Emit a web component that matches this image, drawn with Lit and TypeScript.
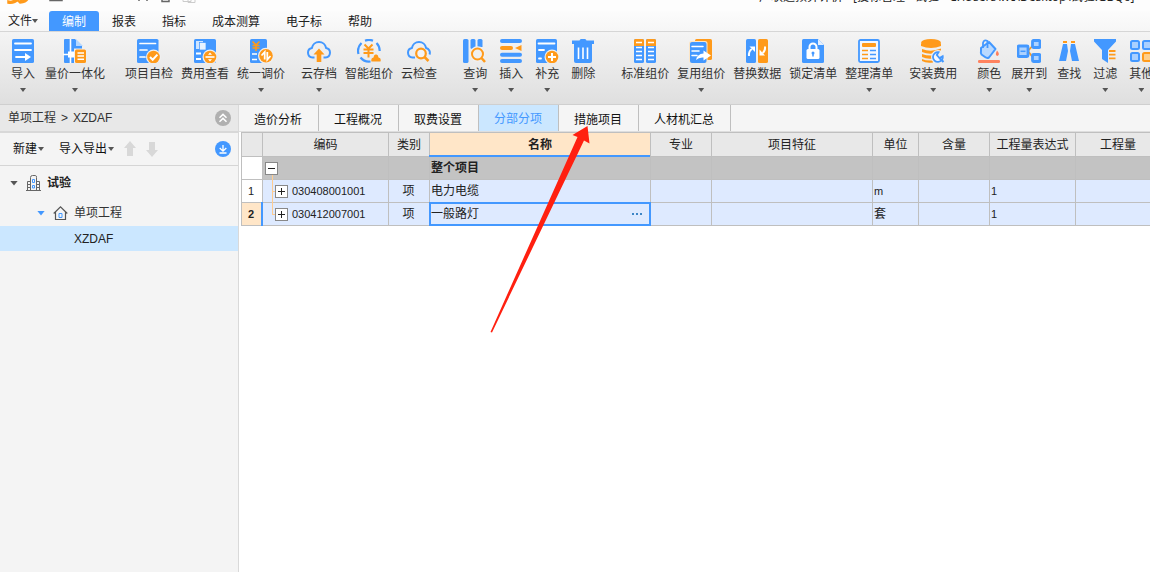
import { LitElement, html, svg, css, nothing } from "lit";
import { customElement, property, state } from "lit/decorators.js";
import { classMap } from "lit/directives/class-map.js";

const B = "#4398ff";
const O = "#ff9a1a";
const W = "#ffffff";

/* Ribbon icons, all drawn on a 24 x 24 grid. */
const ICONS: Record<string, unknown> = {
  import: svg`<rect x="1" width="22" height="24" rx="1.6" fill=${B}/>
    <path d="M4 4.5H20M4 11H20M5 18H11" stroke=${W} stroke-width="1.8" stroke-linecap="round"/>
    <path d="M10 17H14V14L20 18L14 22V19H10Z" fill=${W}/>`,
  integrate: svg`<path d="M2 0H12L19 7V24H2Q1 24 1 23V1Q1 0 2 0Z" fill=${B}/>
    <path d="M13 0L20 7H13Z" fill="#b5d7ff"/>
    <path d="M7.5 0V24M0 15.5H12" stroke=${W} stroke-width="1.6"/><rect x="5" y="12.5" width="6" height="6" fill=${W}/>
    <rect x="11" y="9.5" width="12.5" height="15" fill="#f0f0f0"/>
    <rect x="12" y="10.5" width="11" height="13.5" rx="1.5" fill=${O}/>
    <path d="M14.5 14H21M14.5 17H21M14.5 20.3H21" stroke=${W} stroke-width="1.4"/>`,
  selfcheck: svg`<rect x="0" width="21.500" height="24" rx="1.6" fill=${B}/>
    <path d="M3 4.500H18.500M3 11H10M3 18H8" stroke=${W} stroke-width="1.7" stroke-linecap="round"/>
    <circle cx="16.500" cy="18" r="7.500" fill="#f0f0f0"/><circle cx="16.500" cy="18" r="6.300" fill=${O}/>
    <path d="M13 18L15.700 20.700L20.400 15.600" fill="none" stroke=${W} stroke-width="2"/>`,
  feeview: svg`<rect x="1" width="22" height="24" rx="1.6" fill=${B}/>
    <rect x="3" y="2" width="7" height="8" fill="#cfe5ff"/><rect x="6.500" y="3.500" width="6.500" height="7.500" fill="#e8f3ff" stroke=${B} stroke-width=".7"/>
    <path d="M3 14.500H8M3 20H8" stroke=${W} stroke-width="1.8"/>
    <circle cx="17" cy="18" r="7.500" fill="#f0f0f0"/><circle cx="17" cy="18" r="6.300" fill=${O}/>
    <path d="M12.500 18H21.500" stroke=${W} stroke-width="1.600"/><path d="M15 15.800L17 13.500L19 15.800ZM15 20.200L17 22.500L19 20.200Z" fill=${W}/>`,
  adjust: svg`<rect x="1" width="17" height="24" rx="1.6" fill=${B}/>
    <path d="M3.500 2.500L7 6L10.500 2.500M7 6V12M3.500 6.500H10.500M3.500 9H10.500" fill="none" stroke=${O} stroke-width="1.600"/>
    <path d="M3 15H8M3 20.500H8" stroke=${W} stroke-width="1.500"/>
    <circle cx="17" cy="16.800" r="8" fill="#f0f0f0"/><circle cx="17" cy="16.800" r="6.800" fill=${O}/>
    <path d="M12.500 16.500L15.700 13V20.500M21.500 17L18.300 20.600V13" fill="none" stroke=${W} stroke-width="1.800"/>`,
  cloudup: svg`<path d="M7.500 18.500H5.500A4.800 4.800 0 0 1 4.900 9A7.200 7.200 0 0 1 19.100 9A4.800 4.800 0 0 1 18.500 18.500H16.500" fill="none" stroke=${B} stroke-width="2"/>
    <path d="M12 9.500L17.500 15.500H14.300V23H9.700V15.500H6.500Z" fill=${O}/>`,
  smart: svg`<path d="M1.500 15A11 11 0 0 1 4.500 4M8 1.700A11 11 0 0 1 16 1.700M19.500 4A11 11 0 0 1 22.700 12M3.500 18.500A11 11 0 0 0 13.500 22.500" fill="none" stroke=${B} stroke-width="2.200"/>
    <path d="M7.500 5.500L11.500 9.500L15.500 5.500M11.500 9.500V18.500M6.500 10.500H16.500M6.500 14H16.500" fill="none" stroke=${O} stroke-width="2"/>
    <path d="M14.500 22.500Q13.500 19 16.500 18.500Q17 15 19 15.500Q21 15 21.500 18.500Q24.500 19 23.500 22.500Z" fill=${O}/>`,
  cloudfind: svg`<path d="M8 18.500H5.500A4.800 4.800 0 0 1 4.900 9A7.200 7.200 0 0 1 19.100 9A4.800 4.800 0 0 1 22.500 15.500" fill="none" stroke=${B} stroke-width="2"/>
    <circle cx="14" cy="14.500" r="4.800" fill="#f3f3f3" stroke=${O} stroke-width="2.200"/><path d="M17.500 18L21.500 22" stroke=${O} stroke-width="2.500"/>`,
  query: svg`<rect x="0" width="5.500" height="24" rx="1.600" fill=${B}/><rect x="7.500" width="5" height="10" rx="1.500" fill=${B}/><path d="M14.500 1.500Q14.500 0 16 0H18Q19.500 0 19.500 1.500V8H14.500Z" fill=${B}/>
    <circle cx="14.500" cy="15" r="7.800" fill="#f0f0f0"/><circle cx="14.500" cy="15" r="5.500" fill="none" stroke=${O} stroke-width="2"/><path d="M18.500 19L22 23" stroke=${O} stroke-width="2.500"/>`,
  insert: svg`<path d="M3 2H21M3 15.700H21M3 22H21" stroke=${B} stroke-width="4" stroke-linecap="round"/>
    <path d="M3 9H12" stroke=${O} stroke-width="4" stroke-linecap="round"/><path d="M16 9L22.500 6V12Z" fill=${O}/>`,
  supplement: svg`<rect x="1" width="21" height="24" rx="1.6" fill=${B}/>
    <path d="M3.500 4.500H19.500M4 11H9M4 19.500H6" stroke=${W} stroke-width="1.800" stroke-linecap="round"/>
    <circle cx="17" cy="18" r="7.500" fill="#f0f0f0"/><circle cx="17" cy="18" r="6.300" fill=${O}/>
    <path d="M13 18H21M17 14V22" stroke=${W} stroke-width="2"/>`,
  trash: svg`<path d="M1 1.500H8.500Q9 0 10 0H14Q15 0 15.500 1.500H23V5H1Z" fill=${B}/><path d="M3 5H21V22Q21 24 19 24H5Q3 24 3 22Z" fill=${B}/>
    <path d="M7.500 8.500V20M12 8.500V20M16.500 8.500V20" stroke=${W} stroke-width="1.600"/>`,
  standard: svg`<rect x="1" width="10" height="24" rx="1.600" fill=${B}/><rect x="13" width="10" height="24" rx="1.600" fill=${B}/>
    <path d="M1 7V1.500Q1 0 2.500 0H9.500Q11 0 11 1.500V7ZM13 7V1.500Q13 0 14.500 0H21.500Q23 0 23 1.500V7Z" fill=${O}/>
    <path d="M3 3.500H9M15 3.500H21M3 8.500H9M15 8.500H21M3 12.500H9M15 12.500H21M3 16.500H9M15 16.500H21M3 20.500H9M15 20.500H21" stroke=${W} stroke-width="1.400"/>`,
  reuse: svg`<rect x="6" width="17" height="21" rx="1.600" fill=${O}/><rect x="0" y="2" width="18.500" height="22" rx="2.500" fill="#fbe5c6"/>
    <rect x="1" y="3" width="16.500" height="21" rx="2" fill=${B}/><path d="M3 7.500H14M3 12H10M3 16.500H8" stroke=${W} stroke-width="1.500" stroke-linecap="round"/>
    <path d="M7 21Q8 15 14.500 14.500V11.500L22 16.500L14.500 21.500V18.500Q10 18 7 21Z" fill=${W}/>`,
  replace: svg`<rect x="1" width="10" height="24" rx="1.600" fill=${B}/><rect x="13" width="10" height="24" rx="1.600" fill=${O}/>
    <path d="M4 17Q3.500 12 7 10" fill="none" stroke=${W} stroke-width="2"/><path d="M4.500 7.500H10V13Z" fill=${W}/>
    <path d="M20 7.500Q20.500 12 17.500 14" fill="none" stroke=${W} stroke-width="2"/><path d="M14.500 10.500V16.500H20Z" fill=${W}/>`,
  lock: svg`<path d="M2.500 0H17L23 6V22.500Q23 24 21.500 24H2.500Q1 24 1 22.500V1.500Q1 0 2.500 0Z" fill=${B}/><path d="M17 0L23 6H17Z" fill="#e4f0ff"/>
    <path d="M8.500 11V8A3.500 3.500 0 0 1 15.500 8V11" fill="none" stroke=${W} stroke-width="2"/><rect x="5.500" y="10" width="13" height="10" rx="1.500" fill=${W}/>
    <circle cx="12" cy="14" r="1.500" fill=${B}/><path d="M12 14V17.500" stroke=${B} stroke-width="1.500"/>`,
  tidy: svg`<rect x="2" y="1" width="20" height="22" rx="1.500" fill="#f2f7ff" stroke=${B} stroke-width="1.800"/>
    <rect x="5" y="4" width="14" height="4" rx="1" fill=${O}/><path d="M5 11.500H11M5 15.500H11M5 19.500H11" stroke=${O} stroke-width="1.700"/><path d="M13 11.500H19M13 15.500H19M13 19.500H19" stroke=${B} stroke-width="1.700"/>`,
  install: svg`<path d="M0 4.500V7Q10 11 20 7V4.500ZM1 10V13Q10 17 20 12V9.500Q10 13.500 1 10ZM1 15V18Q6 20.500 12 19.500V16.500Q6 17 1 15ZM1 20V22Q5 24.500 12 23.500V21.500Q5 22 1 20Z" fill=${O}/>
    <ellipse cx="10" cy="3.800" rx="10" ry="3.800" fill=${O}/><circle cx="17" cy="18" r="7" fill="#efefef"/>
    <path d="M17.500 13.200L15.800 16L18.500 19L21.700 17.200A4.900 4.900 0 1 1 17.500 13.200Z" fill="#f4f8ff" stroke=${B} stroke-width="1.800"/><path d="M18.500 19L22.500 23" stroke=${B} stroke-width="2.200"/>`,
  color: svg`<path d="M4 9L12 3L18.500 10L12 18.500Q10 19.500 8 18L4.500 15.500Q3.500 14 4 12Z" fill="#b9d9ff" stroke=${B} stroke-width="2" stroke-linejoin="round"/>
    <path d="M6 9V4Q7 0 10.500 2V9" fill="none" stroke=${B} stroke-width="1.800"/><path d="M20 11.500Q23.500 15.500 20.500 17Q17.500 16.500 20 11.500Z" fill="#ff7f5c"/>
    <rect x="1" y="21" width="22" height="3" rx="1.200" fill="#ff8360"/>`,
  expand: svg`<path d="M11 12L17 5M11 12L17 20" stroke=${O} stroke-width="1.800"/><rect x="1" y="7" width="10" height="10.500" rx="1" fill="#add2ff" stroke=${B} stroke-width="2.800"/><path d="M3.500 12.300H8.500" stroke=${B} stroke-width="1.500"/>
    <rect x="15.500" y="1.500" width="7.500" height="7" rx="1" fill="#add2ff" stroke=${B} stroke-width="2.800"/><rect x="15.500" y="15.500" width="7.500" height="7" rx="1" fill="#add2ff" stroke=${B} stroke-width="2.800"/>`,
  find: svg`<path d="M6 2H10V4H6ZM14 2H18V4H14Z" fill=${O}/><path d="M6 5H10L11 12L9 22H2ZM14 5H18L22 22H15L13 12Z" fill=${B}/>`,
  filter: svg`<path d="M1 0H23V2.500L15 11V24L9 20V11L1 2.500Z" fill=${B}/><path d="M16 12H22.500M16 15.700H22.500M16 19.400H22.500" stroke=${O} stroke-width="1.800"/>`,
  other: svg`<g fill="#a9d0ff" stroke=${B} stroke-width="2"><rect x="2" y="2" width="8" height="8" rx="1.500"/><rect x="14" y="2" width="8" height="8" rx="1.500"/><rect x="2" y="14" width="8" height="8" rx="1.500"/></g>
    <rect x="14" y="14" width="8" height="8" rx="1.500" fill="#ffcf8a" stroke=${O} stroke-width="2"/>`,
};

interface Tool { icon: string; label: string; menu?: boolean }
interface Group { gap: string; tools: Tool[] }

const GROUPS: Group[] = [
  { gap: "g0", tools: [{ icon: "import", label: "导入", menu: true }, { icon: "integrate", label: "量价一体化", menu: true }] },
  { gap: "g12", tools: [{ icon: "selfcheck", label: "项目自检" }, { icon: "feeview", label: "费用查看" }, { icon: "adjust", label: "统一调价", menu: true }] },
  { gap: "g8", tools: [{ icon: "cloudup", label: "云存档", menu: true }, { icon: "smart", label: "智能组价" }, { icon: "cloudfind", label: "云检查" }] },
  { gap: "g16", tools: [{ icon: "query", label: "查询", menu: true }, { icon: "insert", label: "插入", menu: true }, { icon: "supplement", label: "补充", menu: true }, { icon: "trash", label: "删除" }] },
  { gap: "g16", tools: [{ icon: "standard", label: "标准组价" }, { icon: "reuse", label: "复用组价", menu: true }, { icon: "replace", label: "替换数据" }, { icon: "lock", label: "锁定清单" }, { icon: "tidy", label: "整理清单", menu: true }] },
  { gap: "g8", tools: [{ icon: "install", label: "安装费用", menu: true }] },
  { gap: "g10", tools: [{ icon: "color", label: "颜色", menu: true }, { icon: "expand", label: "展开到", menu: true }, { icon: "find", label: "查找" }, { icon: "filter", label: "过滤", menu: true }, { icon: "other", label: "其他", menu: true }] },
];

const reset = css`
  *, *::before, *::after { box-sizing: border-box; }
  button { font: inherit; color: inherit; background: none; border: 0; padding: 0; margin: 0; cursor: pointer; }
  svg { display: block; flex: none; }
  .caret { display: inline-block; flex: none; width: 6px; height: 4px; background: #555; clip-path: polygon(0 0, 100% 0, 50% 100%); }
`;

@customElement("ribbon-bar")
export class RibbonBar extends LitElement {
  static styles = [reset, css`
    :host { display: flex; height: 73px; padding: 7px 0 0 5px; overflow: hidden; background: linear-gradient(#f4f4f4, #dfdfdf); border-bottom: 1px solid #cfcfcf; }
    .group { display: flex; flex: none; align-items: flex-start; }
    .g8 { margin-left: 8px; }
    .g10 { margin-left: 10px; }
    .g12 { margin-left: 12px; }
    .g16 { margin-left: 16px; }
    .tool { display: flex; flex-direction: column; align-items: center; padding: 0 4px; line-height: 22px; white-space: nowrap; }
    .short { padding: 0 6px; }
    .tool .caret { margin-top: 3px; }
  `];
  render() {
    return GROUPS.map((g) => html`<div class="group ${g.gap}">
      ${g.tools.map((t) => html`<button class=${classMap({ tool: true, short: t.label.length === 2 })}>
        <svg width="24" height="24" viewBox="0 0 24 24" aria-hidden="true">${ICONS[t.icon]}</svg>
        <span>${t.label}</span>
        ${t.menu ? html`<span class="caret"></span>` : nothing}
      </button>`)}
    </div>`);
  }
}

@customElement("project-panel")
export class ProjectPanel extends LitElement {
  static styles = [reset, css`
    :host { display: block; flex: none; width: 239px; background: #f4f4f4; border-right: 1px solid #d9d9d9; }
    .crumb, .bar { display: flex; align-items: center; padding: 0 7px 0 8px; }
    .crumb { height: 28px; gap: 5px; background: #e8e8e8; border-bottom: 2px solid #d8d8d8; }
    .bar { height: 33px; padding-left: 13px; color: #111; border-bottom: 1px solid #d5d5d5; }
    .end { margin-left: auto; }
    .drop { display: flex; align-items: center; gap: 1px; line-height: 20px; }
    .drop + .drop { margin-left: 15px; }
    .drop + .move { margin-left: 10px; }
    .move + .move { margin-left: 10px; }
    .tree { margin: 0; padding: 0; list-style: none; }
    .node { display: flex; align-items: center; height: 26px; }
    .root { height: 34px; padding-left: 10px; font-weight: 700; color: #222; }
    .child { padding-left: 37px; }
    .leaf { height: 25px; padding-left: 74px; color: #222; background: #cbe7ff; }
    .twist { width: 8px; height: 5px; flex: none; background: #555; clip-path: polygon(0 0, 100% 0, 50% 100%); }
    .child .twist { background: #4398ff; }
    .twist + svg { margin: 0 6px 0 8px; }
  `];
  render() {
    return html`
      <div class="crumb"><span>单项工程</span><span>&gt;</span><span>XZDAF</span>
        <button class="end" aria-label="收起"><svg width="16" height="16" viewBox="0 0 16 16"><circle cx="8" cy="8" r="8" fill="#b0b0b0"/><path d="M4.500 7.700L8 4.400L11.500 7.700M4.500 11.700L8 8.400L11.500 11.700" fill="none" stroke="#fff" stroke-width="1.500"/></svg></button>
      </div>
      <div class="bar">
        <button class="drop">新建<span class="caret"></span></button>
        <button class="drop">导入导出<span class="caret"></span></button>
        <button class="move" aria-label="上移"><svg width="12" height="16" viewBox="0 0 12 16"><path d="M6 0L12 7H9V15H3V7H0Z" fill="#d8d8d8"/></svg></button>
        <button class="move" aria-label="下移"><svg width="12" height="16" viewBox="0 0 12 16"><path d="M6 16L12 9H9V1H3V9H0Z" fill="#d8d8d8"/></svg></button>
        <button class="end" aria-label="下载"><svg width="16" height="16" viewBox="0 0 16 16"><circle cx="8" cy="8" r="8" fill="#4398ff"/><path d="M8 4V10M4.700 7L8 10.200L11.300 7M4.500 12H11.500" fill="none" stroke="#fff" stroke-width="1.300"/></svg></button>
      </div>
      <ul class="tree">
        <li class="node root"><span class="twist"></span>
          <svg width="15" height="16" viewBox="0 0 15 16" fill="none" stroke="#666"><path d="M0 15.500H15M1.500 15V6.500H4.500M4.500 15V2.500Q4.500 .5 6.500 .5H9.500Q10.500 .5 10.500 2.500V15M10.500 6.500H13.500V15M2 9.500H4M2 12.500H4M11 9.500H13M11 12.500H13"/><path d="M6.500 4.500H8.500V7.500H6.500ZM6.500 10.500H8.500V13H6.500Z" stroke="#4398ff"/></svg>试验</li>
        <li class="node child"><span class="twist"></span>
          <svg width="15" height="14" viewBox="0 0 15 14" fill="none" stroke="#555"><path d="M.7 7.500L7.500 .9L14.300 7.500M2.500 6V13.500H12.500V6" stroke-width="1.200"/><path d="M6 7.500H9V11.500H6Z" stroke="#4398ff"/></svg>单项工程</li>
        <li class="node leaf">XZDAF</li>
      </ul>`;
  }
}

interface Item { code: string; kind: string; name: string; unit: string; expr: string }
const ITEMS: Item[] = [
  { code: "030408001001", kind: "项", name: "电力电缆", unit: "m", expr: "1" },
  { code: "030412007001", kind: "项", name: "一般路灯", unit: "套", expr: "1" },
];
const HEADS = ["", "编码", "类别", "名称", "专业", "项目特征", "单位", "含量", "工程量表达式", "工程量"];

@customElement("bill-grid")
export class BillGrid extends LitElement {
  @property({ type: Number }) selected = 1;
  static styles = [reset, css`
    :host { display: block; overflow: hidden; padding-left: 2px; }
    .grid { width: 920px; table-layout: fixed; border-collapse: separate; border-spacing: 0; border: solid #bfbfbf; border-width: 1px 0 0 1px; color: #222; line-height: 20px; }
    .c0 { width: 21px; } .c1 { width: 126px; } .c2 { width: 41px; } .c3 { width: 221px; } .c4 { width: 61px; }
    .c5 { width: 161px; } .c6 { width: 46px; } .c7 { width: 71px; } .c8 { width: 86px; } .c9 { width: 85px; }
    th, td { position: relative; height: 23px; padding: 0 2px 0 1px; border: solid #bfbfbf; border-width: 0 1px 1px 0; font-weight: 400; text-align: left; white-space: nowrap; }
    thead th { height: 24px; padding: 0; text-align: center; background: #e8e8e8; }
    thead .active { font-weight: 700; background: #ffe6c8; }
    thead .active::after { content: ""; position: absolute; left: -1px; right: 0; bottom: -1px; height: 2px; background: #4398ff; }
    td { background: #deeaff; }
    .total td { font-weight: 700; background: #c3c3c3; }
    .rowno { padding: 0 2px 0 0; font-size: 11px; text-align: center; background: #fff; }
    .current .rowno { font-weight: 700; background: #ffe6c8; }
    .current .rowno::after { content: ""; position: absolute; top: -1px; right: -1px; bottom: -1px; width: 2px; background: #4398ff; }
    .kind { text-align: center; }
    .num { font-size: 11px; }
    .tree { display: flex; align-items: center; gap: 4px; padding-left: 11px; font-size: 11px; }
    .top { padding-left: 1px; }
    .tree::before { content: ""; position: absolute; left: 9px; top: -1px; bottom: -1px; width: 1px; background: #ffcc90; }
    .tree::after { content: ""; position: absolute; left: 9px; top: 11px; width: 4px; height: 1px; background: #ffcc90; }
    .last::before { bottom: 11px; }
    .top::before { top: 16px; }
    .top::after { display: none; }
    .box { position: relative; z-index: 1; width: 13px; height: 13px; background: #fff; border: 1px solid #888; }
    .edit { display: flex; justify-content: space-between; align-items: center; }
    .current .name::after { content: ""; position: absolute; left: -1px; top: -1px; right: -1px; bottom: -1px; border: 2px solid #4398ff; pointer-events: none; }
    .more { padding: 0 5px; }
  `];
  private box(open: boolean) {
    return html`<button class="box" aria-label=${open ? "折叠" : "展开"}><svg width="11" height="11" viewBox="0 0 11 11" stroke="#222"><path d=${open ? "M2 5.500H9" : "M2 5.500H9M5.500 2V9"}/></svg></button>`;
  }
  render() {
    return html`<table class="grid">
      <colgroup>${HEADS.map((_, i) => html`<col class="c${i}">`)}</colgroup>
      <thead><tr>${HEADS.map((h, i) => html`<th class=${classMap({ active: i === 3 })}>${h}</th>`)}</tr></thead>
      <tbody>
        <tr class="total"><th class="rowno"></th><td><div class="tree top">${this.box(true)}</div></td><td></td><td>整个项目</td><td></td><td></td><td></td><td></td><td></td><td></td></tr>
        ${ITEMS.map((r, i) => html`<tr class=${classMap({ current: i === this.selected })}>
          <th class="rowno">${i + 1}</th>
          <td><div class=${classMap({ tree: true, last: i === ITEMS.length - 1 })}>${this.box(false)}<span>${r.code}</span></div></td>
          <td class="kind">${r.kind}</td>
          <td class="name"><div class="edit"><span>${r.name}</span>
            ${i === this.selected ? html`<button class="more" aria-label="更多"><svg width="12" height="2" viewBox="0 0 12 2"><path d="M1 0H3V2H1ZM5 0H7V2H5ZM9 0H11V2H9Z" fill="#3d86c6"/></svg></button>` : nothing}</div></td>
          <td></td><td></td><td class=${classMap({ num: r.unit === "m" })}>${r.unit}</td><td></td><td class="num">${r.expr}</td><td></td>
        </tr>`)}
      </tbody>
    </table>`;
  }
}

@customElement("app-root")
export class AppRoot extends LitElement {
  @state() private tab = "分部分项";
  static styles = [reset, css`
    :host { position: relative; display: flex; flex-direction: column; min-height: 100vh; overflow: hidden; background: #fff; color: #333; font: 12px/20px "Liberation Sans", "Noto Sans CJK SC", sans-serif; }
    .title { display: flex; align-items: center; height: 24px; margin-top: -13px; padding-bottom: 4px; background: #fdfdfd; white-space: nowrap; }
    .quick { width: 66%; }
    .caption { flex: none; color: #222; font-family: "Open Sans", "Noto Sans CJK SC", sans-serif; }
    .menu { display: flex; height: 21px; background: linear-gradient(#fcfcfc, #f6f6f6); border-bottom: 1px solid #d6d6d6; color: #222; }
    .item { padding: 0 13px; line-height: 22px; }
    .file { display: flex; align-items: center; width: 49px; padding: 0 0 0 8px; }
    .on { color: #fff; background: #4398ff; border-radius: 3px 3px 0 0; }
    .main { display: flex; flex: 1; min-width: 0; }
    .work { flex: 1; min-width: 0; background: #fff; }
    .tabs { display: flex; height: 27px; background: #f5f5f5; border-bottom: 1px solid #dedede; }
    .tab { padding: 4px 16px 0 15px; border-right: 1px solid #bfbfbf; color: #111; white-space: nowrap; }
    .picked { color: #4398ff; background: #cbe7ff; padding-top: 2px; }
    .pointer { position: absolute; left: 0; top: 0; pointer-events: none; }
  `];
  render() {
    const menus = ["编制", "报表", "指标", "成本测算", "电子标", "帮助"];
    const tabs = ["造价分析", "工程概况", "取费设置", "分部分项", "措施项目", "人材机汇总"];
    return html`
      <header class="title">
        <div class="quick"><svg width="200" height="16" viewBox="0 0 200 16" aria-hidden="true">
          <path d="M8 12Q13 14 17 8L19 10Q15 15 8 14ZM18 12Q24 12 25 8L28 9Q28 13 20 14Z" fill="#ff9a1a" stroke="#ff9a1a" stroke-width="1.500"/>
          <path d="M50 5H62V11.500H50ZM139 12V9M147 12V9M162 8H169V12.500H162Z" fill="none" stroke="#666" stroke-width="1.500"/>
          <path d="M183 6H191V12.500H183ZM188 10H195V13.500H188Z" fill="none" stroke="#ccc"/></svg></div>
        <span class="caption">广联达预算计价 - [投标管理 - 试验 - C:\\Users\\wc\\Desktop\\试验.GBQ6]</span>
      </header>
      <nav class="menu">
        <button class="item file">文件<span class="caret"></span></button>
        ${menus.map((m, i) => html`<button class=${classMap({ item: true, on: i === 0 })}>${m}</button>`)}
      </nav>
      <ribbon-bar></ribbon-bar>
      <main class="main">
        <project-panel></project-panel>
        <section class="work">
          <div class="tabs" role="tablist">
            ${tabs.map((t) => html`<button role="tab" aria-selected=${t === this.tab} class=${classMap({ tab: true, picked: t === this.tab })} @click=${() => (this.tab = t)}>${t}</button>`)}
          </div>
          <bill-grid></bill-grid>
        </section>
      </main>
      <svg class="pointer" width="600" height="340" viewBox="0 0 600 340" aria-hidden="true"><path d="M490.500 332L577.500 137L572.500 135L587.500 126L589.500 143.500L584 140.500L492 332.500Z" fill="#ff2010"/></svg>`;
  }
}
